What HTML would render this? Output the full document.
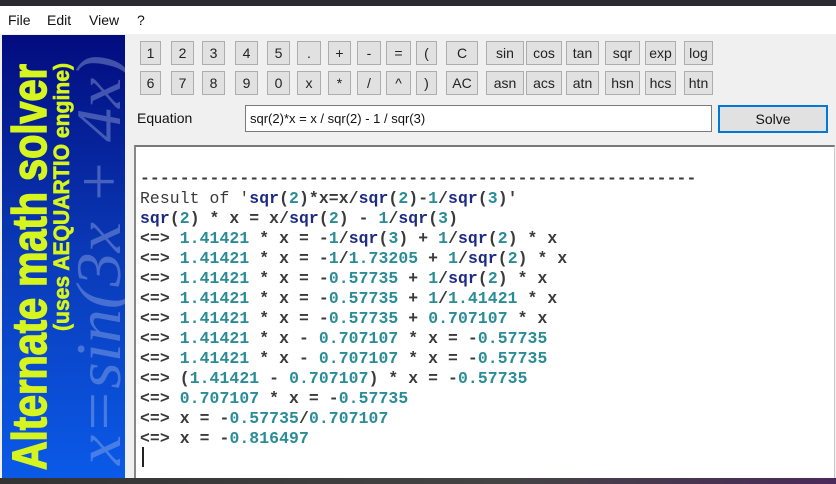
<!DOCTYPE html>
<html><head><meta charset="utf-8"><style>
*{margin:0;padding:0;box-sizing:border-box}
body{width:836px;height:484px;overflow:hidden;background:#f0f0f0;font-family:"Liberation Sans",sans-serif;position:relative}
.top{position:absolute;left:0;top:0;width:836px;height:6px;background:#2a2a30}
.bot{position:absolute;left:0;top:478px;width:836px;height:6px;background:linear-gradient(90deg,#333 0,#444 60%,#4a2a5a 100%)}
.menu{position:absolute;left:0;top:6px;width:836px;height:28px;background:#fff;font-size:14px;color:#111}
.menu span{position:absolute;top:6px}
.banner{position:absolute;left:2px;top:35px;width:123px;height:443px}
.btn{position:absolute;height:24px;background:#e1e1e1;border:1px solid #adadad;font-size:14px;color:#222;text-align:center;line-height:22px}
.lbl{position:absolute;left:137px;top:110px;font-size:14px;color:#111}
.inp{position:absolute;left:245px;top:105px;width:467px;height:27px;background:#fff;border:1px solid #7a7a7a;font-size:13px;line-height:25px;padding-left:4px;color:#111}
.solve{position:absolute;left:718px;top:105px;width:110px;height:28px;background:#e1e1e1;border:2px solid #0078d7;font-size:14px;text-align:center;line-height:24px;color:#111}
.out{position:absolute;left:134px;top:145px;width:701px;height:334px;background:#fff;border-top:2px solid #777;border-left:2px solid #888;border-right:1px solid #ccc}
pre{position:absolute;left:4px;top:22px;font-family:"Liberation Mono","Courier New",monospace;font-size:16.4px;line-height:20px;font-weight:bold;color:#3a3a3a;letter-spacing:0.1px}
.n{color:#2a8c96}.k{color:#1b2a85}
.cur{position:absolute;left:6px;top:300px;width:2px;height:20px;background:#222}
</style></head><body>
<div class="top"></div>
<div class="menu"><span style="left:8px">File</span><span style="left:47px">Edit</span><span style="left:89px">View</span><span style="left:137px">?</span></div>
<div class="banner"><svg width="123" height="443" viewBox="0 0 123 443">
<defs><linearGradient id="g" x1="0" y1="0" x2="0" y2="1"><stop offset="0" stop-color="#020c7e"/><stop offset="0.5" stop-color="#0a3ab8"/><stop offset="1" stop-color="#0a5ae8"/></linearGradient></defs>
<rect width="123" height="443" fill="url(#g)"/>
<text transform="translate(118,430) rotate(-90)" font-family="Liberation Serif,serif" font-style="italic" font-size="64" fill="#b8c8f0" opacity="0.35" textLength="410" lengthAdjust="spacingAndGlyphs">x=sin(3x + 4x)</text>
<text transform="translate(44,435) rotate(-90)" font-family="Liberation Sans Narrow,Liberation Sans,sans-serif" font-weight="bold" font-size="48" fill="#d6f51e" stroke="#d6f51e" stroke-width="1.5" textLength="406" lengthAdjust="spacingAndGlyphs">Alternate math solver</text>
<text transform="translate(67,296) rotate(-90)" font-family="Liberation Sans Narrow,Liberation Sans,sans-serif" font-weight="bold" font-size="22" fill="#d6f51e" stroke="#d6f51e" stroke-width="0.6" textLength="268" lengthAdjust="spacingAndGlyphs">(uses AEQUARTIO engine)</text>
</svg></div>

<div class="btn" style="left:140px;top:41px;width:21px">1</div>
<div class="btn" style="left:171px;top:41px;width:23px">2</div>
<div class="btn" style="left:202px;top:41px;width:23px">3</div>
<div class="btn" style="left:235px;top:41px;width:23px">4</div>
<div class="btn" style="left:267px;top:41px;width:23px">5</div>
<div class="btn" style="left:297px;top:41px;width:24px">.</div>
<div class="btn" style="left:328px;top:41px;width:23px">+</div>
<div class="btn" style="left:357px;top:41px;width:24px">-</div>
<div class="btn" style="left:386px;top:41px;width:25px">=</div>
<div class="btn" style="left:416px;top:41px;width:21px">(</div>
<div class="btn" style="left:446px;top:41px;width:32px">C</div>
<div class="btn" style="left:486px;top:41px;width:38px">sin</div>
<div class="btn" style="left:526px;top:41px;width:36px">cos</div>
<div class="btn" style="left:566px;top:41px;width:33px">tan</div>
<div class="btn" style="left:605px;top:41px;width:35px">sqr</div>
<div class="btn" style="left:645px;top:41px;width:31px">exp</div>
<div class="btn" style="left:684px;top:41px;width:29px">log</div>

<div class="btn" style="left:140px;top:71px;width:21px">6</div>
<div class="btn" style="left:171px;top:71px;width:23px">7</div>
<div class="btn" style="left:202px;top:71px;width:23px">8</div>
<div class="btn" style="left:235px;top:71px;width:23px">9</div>
<div class="btn" style="left:267px;top:71px;width:23px">0</div>
<div class="btn" style="left:297px;top:71px;width:24px">x</div>
<div class="btn" style="left:328px;top:71px;width:23px">*</div>
<div class="btn" style="left:357px;top:71px;width:24px">/</div>
<div class="btn" style="left:386px;top:71px;width:25px">^</div>
<div class="btn" style="left:416px;top:71px;width:21px">)</div>
<div class="btn" style="left:446px;top:71px;width:32px">AC</div>
<div class="btn" style="left:486px;top:71px;width:38px">asn</div>
<div class="btn" style="left:526px;top:71px;width:36px">acs</div>
<div class="btn" style="left:566px;top:71px;width:33px">atn</div>
<div class="btn" style="left:605px;top:71px;width:35px">hsn</div>
<div class="btn" style="left:645px;top:71px;width:31px">hcs</div>
<div class="btn" style="left:684px;top:71px;width:29px">htn</div>

<div class="lbl">Equation</div>
<div class="inp">sqr(2)*x = x / sqr(2) - 1 / sqr(3)</div>
<div class="solve">Solve</div>

<div class="out"><pre>--------------------------------------------------------
<span style="font-weight:normal">Result of '</span><span class="k">sqr</span>(<span class="n">2</span>)*x=x/<span class="k">sqr</span>(<span class="n">2</span>)-<span class="n">1</span>/<span class="k">sqr</span>(<span class="n">3</span>)'
<span class="k">sqr</span>(<span class="n">2</span>) * x = x/<span class="k">sqr</span>(<span class="n">2</span>) - <span class="n">1</span>/<span class="k">sqr</span>(<span class="n">3</span>)
&lt;=&gt; <span class="n">1.41421</span> * x = -<span class="n">1</span>/<span class="k">sqr</span>(<span class="n">3</span>) + <span class="n">1</span>/<span class="k">sqr</span>(<span class="n">2</span>) * x
&lt;=&gt; <span class="n">1.41421</span> * x = -<span class="n">1</span>/<span class="n">1.73205</span> + <span class="n">1</span>/<span class="k">sqr</span>(<span class="n">2</span>) * x
&lt;=&gt; <span class="n">1.41421</span> * x = -<span class="n">0.57735</span> + <span class="n">1</span>/<span class="k">sqr</span>(<span class="n">2</span>) * x
&lt;=&gt; <span class="n">1.41421</span> * x = -<span class="n">0.57735</span> + <span class="n">1</span>/<span class="n">1.41421</span> * x
&lt;=&gt; <span class="n">1.41421</span> * x = -<span class="n">0.57735</span> + <span class="n">0.707107</span> * x
&lt;=&gt; <span class="n">1.41421</span> * x - <span class="n">0.707107</span> * x = -<span class="n">0.57735</span>
&lt;=&gt; <span class="n">1.41421</span> * x - <span class="n">0.707107</span> * x = -<span class="n">0.57735</span>
&lt;=&gt; (<span class="n">1.41421</span> - <span class="n">0.707107</span>) * x = -<span class="n">0.57735</span>
&lt;=&gt; <span class="n">0.707107</span> * x = -<span class="n">0.57735</span>
&lt;=&gt; x = -<span class="n">0.57735</span>/<span class="n">0.707107</span>
&lt;=&gt; x = -<span class="n">0.816497</span></pre><div class="cur"></div></div>
<div class="bot"></div>
</body></html>
